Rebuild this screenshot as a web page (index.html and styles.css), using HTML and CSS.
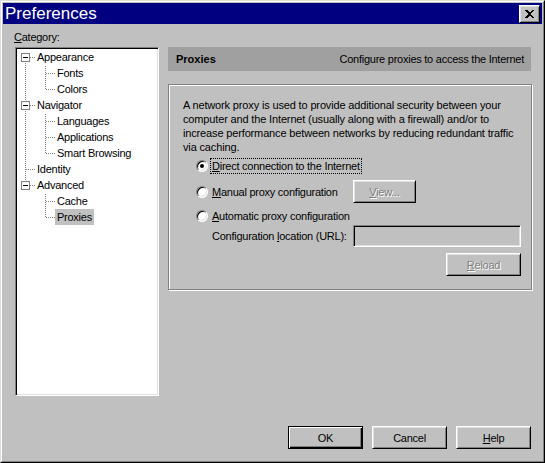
FILE: index.html
```html
<!DOCTYPE html>
<html lang="en">
<head>
  <meta charset="UTF-8">
  <title>Preferences</title>
  <link rel="stylesheet" href="styles.css">
</head>
<body>

<div class="window">
  <div class="frame">
    <div class="titlebar">
      <span class="title">Preferences</span>
      <button class="close" aria-label="Close">
        <svg width="9" height="8" viewBox="0 0 9 8" shape-rendering="crispEdges">
          <path d="M0 0h2l2.5 2.5L7 0h2L5.5 4 9 8H7L4.5 5.5 2 8H0l3.5-4z" fill="#000"/>
        </svg>
      </button>
    </div>

    <div class="body">
      <div class="main">
        <div class="sidebar">
          <div class="cat-label"><u>C</u>ategory:</div>
          <div class="tree">
            <ul class="root">
              <li>
                <div class="node top"><span class="toggle"></span><span class="label">Appearance</span></div>
                <ul class="children">
                  <li><div class="node child"><span class="label">Fonts</span></div></li>
                  <li><div class="node child"><span class="label">Colors</span></div></li>
                </ul>
              </li>
              <li>
                <div class="node top"><span class="toggle"></span><span class="label">Navigator</span></div>
                <ul class="children">
                  <li><div class="node child"><span class="label">Languages</span></div></li>
                  <li><div class="node child"><span class="label">Applications</span></div></li>
                  <li><div class="node child"><span class="label">Smart Browsing</span></div></li>
                </ul>
              </li>
              <li>
                <div class="node top"><span class="label">Identity</span></div>
              </li>
              <li>
                <div class="node top"><span class="toggle"></span><span class="label">Advanced</span></div>
                <ul class="children">
                  <li><div class="node child"><span class="label">Cache</span></div></li>
                  <li><div class="node child"><span class="label selected">Proxies</span></div></li>
                </ul>
              </li>
            </ul>
          </div>
        </div>

        <div class="panel">
          <div class="panel-head">
            <b>Proxies</b>
            <span>Configure proxies to access the Internet</span>
          </div>

          <div class="group">
            <p class="intro">A network proxy is used to provide additional security between your<br>
              computer and the Internet (usually along with a firewall) and/or to<br>
              increase performance between networks by reducing redundant traffic<br>
              via caching.</p>

            <div class="options">
              <div class="opt opt-direct">
                <span class="radio checked"></span>
                <span class="opt-text focused"><u>D</u>irect connection to the Internet</span>
              </div>

              <div class="opt-row opt-manual">
                <div class="opt">
                  <span class="radio"></span>
                  <span class="opt-text"><u>M</u>anual proxy configuration</span>
                </div>
                <button class="btn view-btn"><span class="disabled"><u>V</u>iew...</span></button>
              </div>

              <div class="opt opt-auto">
                <span class="radio"></span>
                <span class="opt-text"><u>A</u>utomatic proxy configuration</span>
              </div>

              <div class="opt-row opt-url">
                <span class="url-label">Configuration <u>l</u>ocation (URL):</span>
                <span class="field"></span>
              </div>

              <div class="reload-row">
                <button class="btn"><span class="disabled"><u>R</u>eload</span></button>
              </div>
            </div>
          </div>
        </div>
      </div>

      <div class="actions">
        <button class="btn default">OK</button>
        <button class="btn">Cancel</button>
        <button class="btn"><u>H</u>elp</button>
      </div>
    </div>
  </div>
</div>

</body>
</html>
```

FILE: styles.css
```css
* {
  box-sizing: border-box;
}

html, body {
  margin: 0;
}

body {
  font-family: "Liberation Sans", Arial, sans-serif;
  font-size: 11px;
  letter-spacing: -0.25px;
  color: #000;
  background: #c0c0c0;
}

u {
  text-decoration: underline;
  text-underline-offset: 1px;
}

.window {
  width: 545px;
  height: 463px;
  border: 1px solid;
  border-color: #dfdfdf #000 #000 #dfdfdf;
  background: #c0c0c0;
}

.frame {
  height: 100%;
  border: 1px solid;
  border-color: #fff #808080 #808080 #fff;
  padding: 1px;
  display: flex;
  flex-direction: column;
}

/* title bar */
.titlebar {
  height: 21px;
  background: #000080;
  color: #fff;
  display: flex;
  align-items: center;
  justify-content: space-between;
  padding: 0 2px;
}

.title {
  font-size: 17px;
  line-height: 21px;
  letter-spacing: 0;
}

.close {
  width: 21px;
  height: 18px;
  padding: 0;
  margin-top: 1px;
  background: #c0c0c0;
  border: 1px solid;
  border-color: #fff #000 #000 #fff;
  box-shadow: inset 1px 1px #dfdfdf, inset -1px -1px #808080;
  display: flex;
  align-items: center;
  justify-content: center;
}

/* main body */
.body {
  flex: 1;
  padding: 6px 11px 0 12px;
  display: flex;
  flex-direction: column;
}

.main {
  display: flex;
}

.sidebar {
  width: 144px;
  flex-shrink: 0;
}

.cat-label {
  line-height: 14px;
  margin-bottom: 3px;
  margin-left: -1px;
}

/* tree */
.tree {
  height: 349px;
  background: #fff;
  border: 1px solid;
  border-color: #808080 #fff #fff #808080;
  box-shadow: inset 1px 1px #000, inset -1px -1px #dfdfdf;
  padding: 1px 0 0 1px;
}

.tree ul {
  list-style: none;
  margin: 0;
  padding: 0;
  position: relative;
}

.root::before,
.children::before {
  content: "";
  position: absolute;
  width: 1px;
  background: repeating-linear-gradient(to bottom, #808080 0 1px, transparent 1px 2px);
}

.root::before {
  left: 8px;
  top: 8px;
  bottom: 40px;
}

.children::before {
  left: 28px;
  top: 1px;
  bottom: 8px;
}

.node {
  position: relative;
  height: 16px;
  line-height: 16px;
  white-space: nowrap;
}

.node::before {
  content: "";
  position: absolute;
  top: 8px;
  height: 1px;
  background: repeating-linear-gradient(to right, #808080 0 1px, transparent 1px 2px);
}

.node.top::before {
  left: 9px;
  width: 9px;
}

.node.child::before {
  left: 29px;
  width: 9px;
}

.node.top .label {
  margin-left: 18px;
}

.node.child .label {
  margin-left: 38px;
}

.label {
  display: inline-block;
  padding: 0 2px;
  height: 16px;
}

.label.selected {
  background: #c0c0c0;
}

.toggle {
  position: absolute;
  left: 4px;
  top: 4px;
  width: 9px;
  height: 9px;
  border: 1px solid #808080;
  background: #fff;
  z-index: 1;
}

.toggle::after {
  content: "";
  position: absolute;
  left: 1px;
  top: 3px;
  width: 5px;
  height: 1px;
  background: #000;
}

/* right panel */
.panel {
  margin-left: 9px;
  margin-top: 17px;
  width: 364px;
  flex-shrink: 0;
}

.panel-head {
  height: 24px;
  margin-right: 1px;
  background: #a0a0a0;
  display: flex;
  align-items: center;
  justify-content: space-between;
  padding: 0 7px 0 8px;
}

.panel-head b {
  letter-spacing: 0;
}

.group {
  margin-top: 13px;
  height: 206px;
  border: 1px solid #808080;
  box-shadow: inset 1px 1px #fff, 1px 1px #fff;
  padding: 13px 10px 0 14px;
}

.intro {
  margin: 0;
  line-height: 14px;
  letter-spacing: -0.15px;
  white-space: nowrap;
}

.options {
  padding-left: 13px;
}

.opt {
  display: flex;
  align-items: center;
  height: 16px;
}

.opt-direct {
  margin-top: 4px;
}

.opt-row {
  display: grid;
  grid-template-columns: 157px 1fr;
  align-items: center;
}

.opt-manual {
  margin-top: 6px;
  height: 23px;
}

.opt-auto {
  margin-top: 5px;
}

.opt-url {
  margin-top: 1px;
  height: 22px;
}

.url-label {
  padding-left: 16px;
  white-space: nowrap;
}

.reload-row {
  margin-top: 6px;
  display: flex;
  justify-content: flex-end;
}

.radio {
  position: relative;
  width: 12px;
  height: 12px;
  flex-shrink: 0;
  border-radius: 50%;
  border: 1px solid;
  border-color: #808080 #fff #fff #808080;
  background: #fff;
  box-shadow: inset 1px 1px #000, inset -1px -1px #dfdfdf;
  margin-right: 3px;
}

.radio.checked::after {
  content: "";
  position: absolute;
  left: 3px;
  top: 3px;
  width: 4px;
  height: 4px;
  border-radius: 50%;
  background: #000;
}

.opt-text {
  padding: 0 1px;
  line-height: 14px;
  white-space: nowrap;
}

.opt-text.focused {
  outline: 1px dotted #000;
  outline-offset: 0;
}

.field {
  height: 22px;
  background: #c0c0c0;
  border: 1px solid;
  border-color: #808080 #fff #fff #808080;
  box-shadow: inset 1px 1px #000, inset -1px -1px #dfdfdf;
}

/* buttons */
.btn {
  width: 75px;
  height: 23px;
  padding: 0;
  font: inherit;
  letter-spacing: inherit;
  color: #000;
  background: #c0c0c0;
  border: 1px solid;
  border-color: #fff #000 #000 #fff;
  box-shadow: inset 1px 1px #dfdfdf, inset -1px -1px #808080;
}

.btn.default {
  border-color: #000;
  box-shadow: inset 1px 1px #fff, inset -1px -1px #000, inset -2px -2px #808080;
}

.view-btn {
  width: 63px;
}

.disabled {
  color: #808080;
  text-shadow: 1px 1px 0 #fff;
}

.actions {
  margin-top: 30px;
  display: flex;
  justify-content: flex-end;
  gap: 9px;
}
```
